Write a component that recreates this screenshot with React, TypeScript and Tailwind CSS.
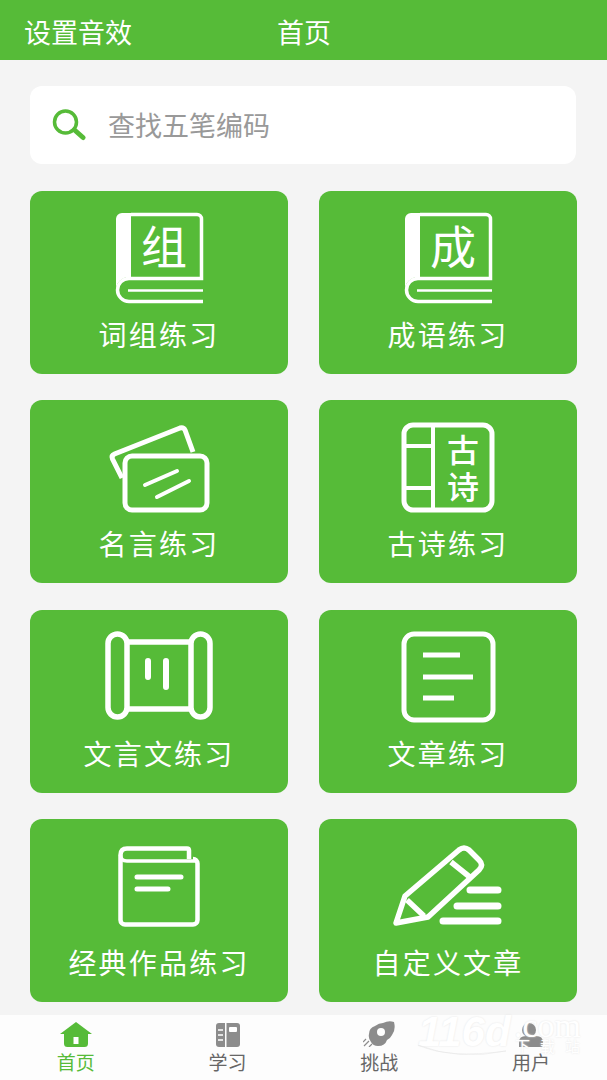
import { ReactNode } from 'react';

const cjk = '"Noto Sans CJK SC", sans-serif';

const BookIcon = ({ char }: { char: string }) => (
  <svg width="120" height="100" viewBox="0 0 120 100" fill="none" stroke="#fff">
    <path d="M32 6H23a6 6 0 0 0-6 6V83A13 13 0 0 1 30 70H32Z" fill="#fff" stroke="none" />
    <path d="M32 7.500H98a4.500 4.500 0 0 1 4.500 4.500V71.500H30A11.500 11.500 0 0 0 30 94.500H104" strokeWidth="3.500" />
    <path d="M29 83.500H104" strokeWidth="2.500" />
    <text x="65" y="57" textAnchor="middle" fontSize="46" fill="#fff" stroke="none" fontFamily={cjk}>
      {char}
    </text>
  </svg>
);

const CardsIcon = () => (
  <svg width="120" height="100" viewBox="0 0 120 100" fill="none" stroke="#fff" strokeWidth="5">
    <rect x="26" y="40" width="82" height="54" rx="7" />
    <path d="M23 62L13.500 43Q12 39.500 15.500 38L81 12Q84.500 11 86 14L94 36" />
    <path d="M46 69L78 55M58 81L90 65" strokeWidth="4" strokeLinecap="round" />
  </svg>
);

const PoemIcon = () => (
  <svg width="120" height="100" viewBox="0 0 120 100" fill="none" stroke="#fff" strokeWidth="5">
    <rect x="16" y="9" width="88" height="85" rx="9" />
    <path d="M45 9V94M16 30H45M16 72H45" strokeWidth="4" />
    <text x="75" y="46" textAnchor="middle" fontSize="32" fontWeight="500" fill="#fff" stroke="none" fontFamily={cjk}>
      古
    </text>
    <text x="75" y="83" textAnchor="middle" fontSize="32" fontWeight="500" fill="#fff" stroke="none" fontFamily={cjk}>
      诗
    </text>
  </svg>
);

const ScrollIcon = () => (
  <svg width="120" height="100" viewBox="0 0 120 100" fill="none" stroke="#fff" strokeWidth="5.500">
    <rect x="9" y="8" width="19" height="83" rx="9.500" />
    <rect x="92" y="8" width="19" height="83" rx="9.500" />
    <path d="M28 16H92M28 83H92" />
    <path d="M49 35V51M67 35V61" strokeWidth="6" strokeLinecap="round" />
  </svg>
);

const ArticleIcon = () => (
  <svg width="120" height="100" viewBox="0 0 120 100" fill="none" stroke="#fff" strokeWidth="5">
    <rect x="16" y="8" width="89" height="86" rx="10" />
    <path d="M35 29H72M35 51H85M35 72H66" />
  </svg>
);

const ClassicIcon = () => (
  <svg width="120" height="100" viewBox="0 0 120 100" fill="none" stroke="#fff" strokeWidth="4.500">
    <path d="M90 24V15.500Q90 13.500 88 13.500H28Q21.500 13.500 21.500 20V85A4.500 4.500 0 0 0 26 89.500H94A4.500 4.500 0 0 0 98.500 85V28.500A4.500 4.500 0 0 0 94 24" />
    <path d="M21.500 20Q21.500 26 28 26H98" strokeWidth="3.500" />
    <path d="M38 42H82M38 54H69" strokeWidth="5" strokeLinecap="round" />
  </svg>
);

const PencilIcon = () => (
  <svg width="120" height="100" viewBox="0 0 120 100" fill="none" stroke="#fff" strokeWidth="5.500" strokeLinejoin="round">
    <path d="M8 88L17 61L71 15Q76 11 81 15L91 25Q96 30 91 35L40 82Z" />
    <path d="M19 65L36 81M63 27L83 43" />
    <path d="M82 55H110M69 71H110M55 86H110" strokeWidth="7" strokeLinecap="round" />
  </svg>
);

const cards: { label: string; icon: ReactNode }[] = [
  { label: '词组练习', icon: <BookIcon char="组" /> },
  { label: '成语练习', icon: <BookIcon char="成" /> },
  { label: '名言练习', icon: <CardsIcon /> },
  { label: '古诗练习', icon: <PoemIcon /> },
  { label: '文言文练习', icon: <ScrollIcon /> },
  { label: '文章练习', icon: <ArticleIcon /> },
  { label: '经典作品练习', icon: <ClassicIcon /> },
  { label: '自定义文章', icon: <PencilIcon /> },
];

const HomeTab = () => (
  <svg width="32" height="25" viewBox="0 0 32 25" fill="#56bb38">
    <path d="M16 0L32 12H28V21.500Q28 25 24.500 25H7.500Q4 25 4 21.500V12H0Z" />
    <rect x="13.500" y="15" width="5" height="7" fill="#fff" />
  </svg>
);

const StudyTab = () => (
  <svg width="24" height="24" viewBox="0 0 24 24" fill="#8c8c8c">
    <path d="M3 0H9V24H3Q0 24 0 21V3Q0 0 3 0Z" />
    <path d="M10.500 0H21Q24 0 24 3V21Q24 24 21 24H10.500Z" />
    <path d="M2 7H7M2 12H7M2 17H7" stroke="#fff" strokeWidth="1.500" />
    <rect x="13" y="4" width="8" height="5" rx="1" fill="#fff" />
  </svg>
);

const RocketTab = () => (
  <svg width="32" height="26" viewBox="0 0 32 26" fill="#8c8c8c">
    <path d="M31 1Q33 9 29 14Q27 18 24 19Q22 25 15 25Q10 25 8 21Q5 17 6 13Q6 7 12 5Q16 2 20 2Q26 -1 31 1Z" />
    <circle cx="18" cy="11" r="4" fill="#fff" />
    <path d="M6 20L1 25M3 18L0 21M9 23L6 26" stroke="#8c8c8c" strokeWidth="1.200" fill="none" />
  </svg>
);

const UserTab = () => (
  <svg width="30" height="24" viewBox="0 0 30 24" fill="#8c8c8c">
    <circle cx="13" cy="7" r="7" />
    <path d="M3 24V19Q3 13 10 13H20Q27 13 27 19V24Z" />
  </svg>
);

const tabs: { label: string; icon: ReactNode; active?: boolean }[] = [
  { label: '首页', icon: <HomeTab />, active: true },
  { label: '学习', icon: <StudyTab /> },
  { label: '挑战', icon: <RocketTab /> },
  { label: '用户', icon: <UserTab /> },
];

const App = () => {
  return (
    <div className="flex h-[1080px] flex-col overflow-hidden bg-[#f4f4f4] font-['Noto_Sans_CJK_SC',sans-serif]">
      <header className="flex h-[60px] shrink-0 items-center bg-[#56bb38] pl-6 pt-1 text-[27px] text-white">
        <span className="w-[253px]">设置音效</span>
        <span>首页</span>
      </header>

      <main className="flex-1 px-[30px] pt-[26px]">
        <div className="flex h-[78px] w-[546px] items-center rounded-[12px] bg-white pl-[22px]">
          <svg width="36" height="32" viewBox="0 0 36 32" fill="none" stroke="#56bb38">
            <circle cx="13.500" cy="13" r="11" strokeWidth="3.500" />
            <path d="M22.500 21L31 28.500" strokeWidth="5" strokeLinecap="round" />
          </svg>
          <span className="ml-[20px] text-[27px] text-[#999]">查找五笔编码</span>
        </div>

        <div className="mt-[27px] grid grid-cols-[258px_258px] gap-x-[31px] gap-y-[26.33px]">
          {cards.map((card) => (
            <div
              key={card.label}
              className="flex h-[183px] flex-col items-center rounded-[12px] bg-[#56bb38] pt-4 text-white"
            >
              {card.icon}
              <span className="mt-[9px] text-[28px] leading-9 tracking-[2.200px]">{card.label}</span>
            </div>
          ))}
        </div>
      </main>

      <nav className="relative grid h-[65px] shrink-0 grid-cols-4 bg-[#fdfdfd]">
        {tabs.map((tab) => (
          <div key={tab.label} className="flex flex-col items-center">
            <div className="flex h-[32px] items-end">{tab.icon}</div>
            <span className={`mt-[3px] text-[19px] leading-[24px] ${tab.active ? 'text-[#56bb38]' : 'text-[#666]'}`}>
              {tab.label}
            </span>
          </div>
        ))}
        {/* watermark over the tab bar */}
        <span className="absolute left-[418px] top-0 font-['Liberation_Sans',sans-serif] text-[42px] font-bold italic leading-[34px] text-white [text-shadow:0_0_2px_#e4e4e4]">
          116d
        </span>
        <span className="absolute left-[514px] top-0 font-['Liberation_Serif',serif] text-[34px] leading-[22px] text-white [text-shadow:0_0_2px_#e4e4e4]">
          .com
        </span>
        <span className="absolute left-[515px] top-[23px] text-[15px] leading-none tracking-[10px] text-white [text-shadow:0_0_2px_#e4e4e4]">
          下载站
        </span>
        <svg className="absolute left-[418px] top-[30px]" width="90" height="14" viewBox="0 0 90 14" fill="#fff">
          <path d="M0 0Q30 14 88 6Q40 16 0 0Z" stroke="#e4e4e4" strokeWidth="0.500" />
        </svg>
      </nav>
    </div>
  );
};

export default App;
